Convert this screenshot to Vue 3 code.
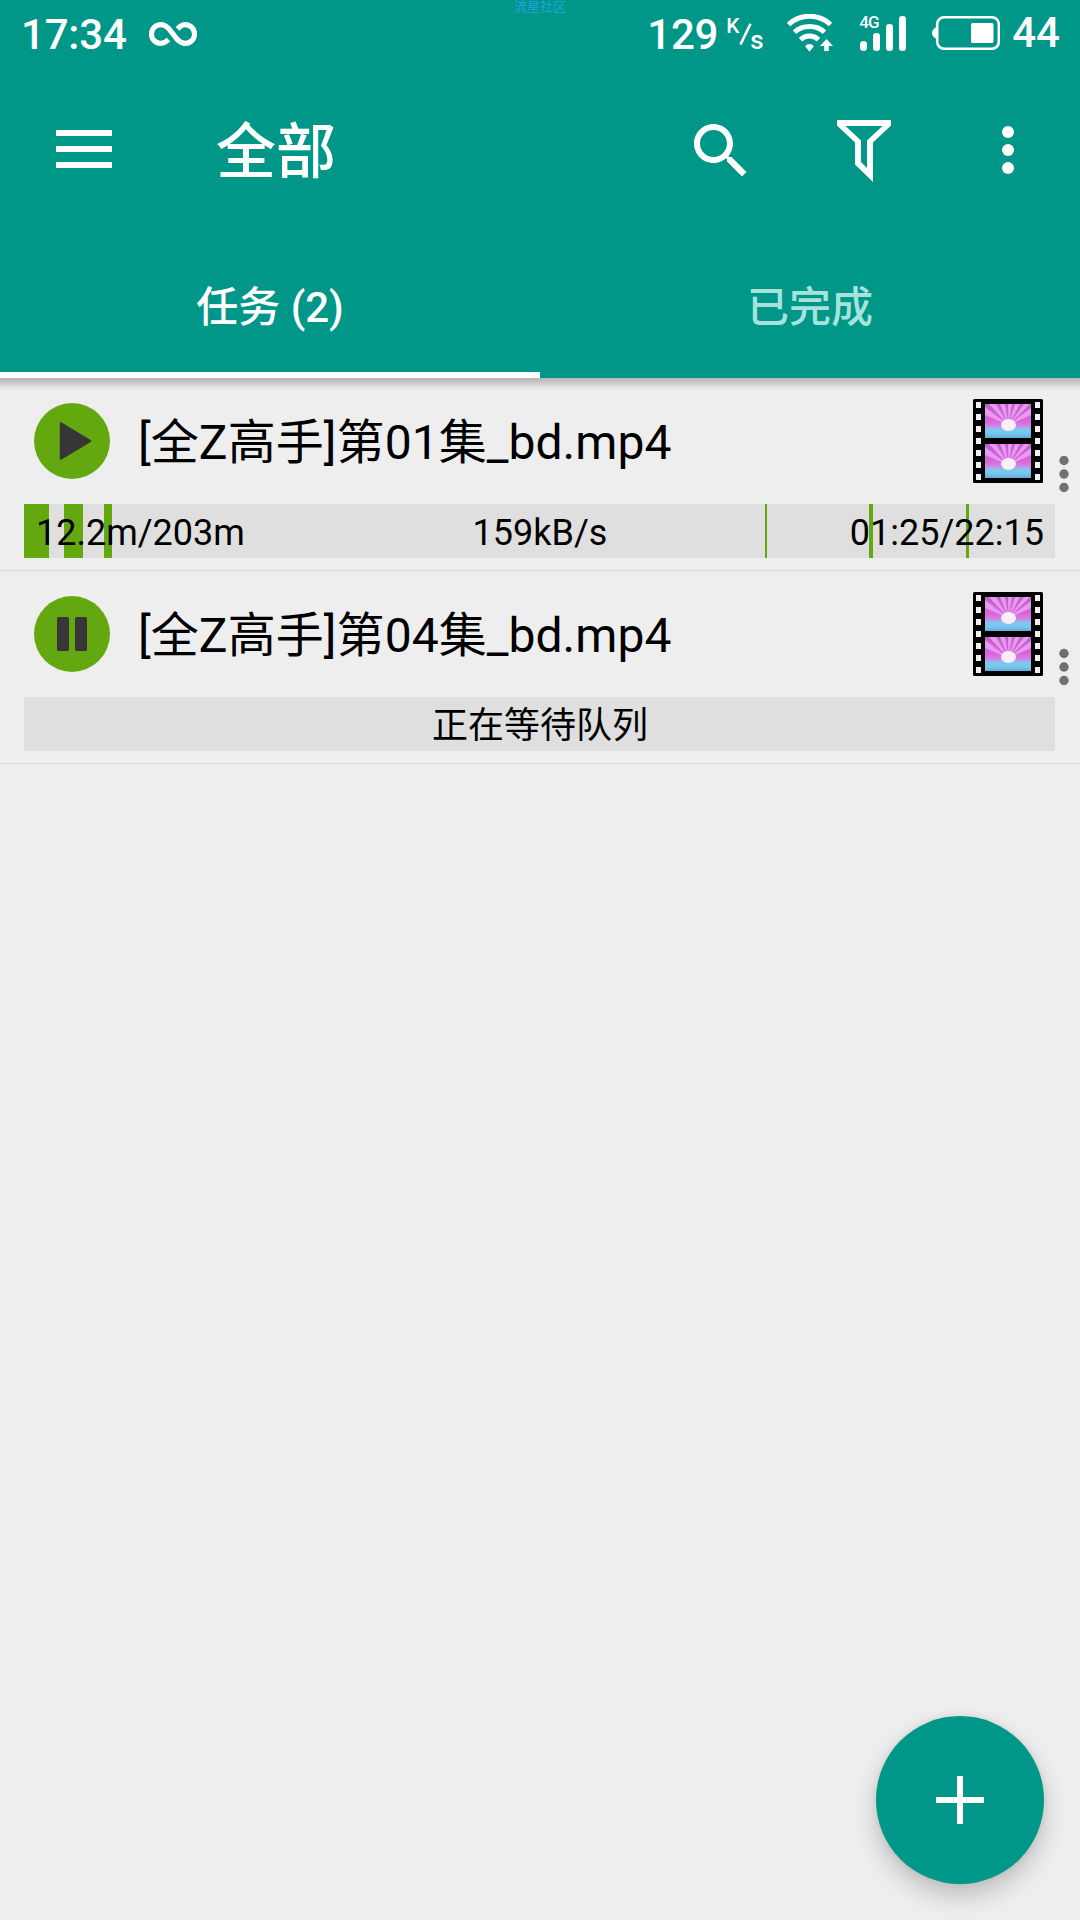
<script setup>
const tasks = [
  {
    name: '[全Z高手]第01集_bd.mp4',
    running: true,
    size: '12.2m/203m',
    speed: '159kB/s',
    time: '01:25/22:15',
    chunks: [
      { at: 0, size: 25 },
      { at: 40, size: 19 },
      { at: 80, size: 8 },
      { at: 741, size: 2 },
      { at: 845, size: 4 },
      { at: 942, size: 3 }
    ]
  },
  { name: '[全Z高手]第04集_bd.mp4', running: false, status: '正在等待队列', chunks: [] }
]
const holes = [3, 15, 27, 39, 51, 63, 75]
const frames = [5, 45]
</script>

<template>
  <div class="screen">
    <header class="header">
      <div class="watermark">流星社区</div>
      <div class="status">
        <span class="clock">17:34</span>
        <svg class="infinity" width="48" height="24" viewBox="0 0 48 24" fill="none" stroke="#fff" stroke-width="5.200">
          <path d="M19.500 17.500C17 20 15 21.400 11.800 21.400a9.400 9.400 0 0 1 0-18.800c3.400 0 5.600 1.500 8 4L28.200 17.400c2.400 2.500 4.600 4 8 4a9.400 9.400 0 0 0 0-18.800c-3.200 0-5.200 1.700-7.700 4.200" />
        </svg>
        <span class="spacer"></span>
        <span class="rate">129</span>
        <span class="unit"><span class="k">K</span><svg width="13" height="22" viewBox="0 0 13 22"><path d="M1.500 21.500L11.500.8" stroke="#fff" stroke-width="2.600" /></svg><span class="s">s</span></span>
        <svg class="wifi" width="46" height="38" viewBox="0 0 46 38" fill="none" stroke="#fff" stroke-width="5">
          <path d="M1.500 10.500C13-.5 32-.5 43.500 10.500" />
          <path d="M7.500 18.200C15.500 10.500 29.500 10.500 37.500 18.200" />
          <path d="M13.500 25.700c5-4.800 13-4.800 18 0" />
          <path d="M18.200 32.200c2-2.800 6.600-2.800 8.600 0l-4.300 5.500z" fill="#fff" stroke="none" />
          <path d="M39.500 25l6.500 7h-4.200v5h-4.600v-5H33z" fill="#fff" stroke="none" />
        </svg>
        <span class="signal">
          <span class="net">4G</span>
          <svg width="46" height="36" viewBox="0 0 46 36" fill="#fff">
            <rect x="0" y="25" width="7" height="10" rx="3.500" />
            <rect x="13" y="17" width="7" height="18" rx="3.200" />
            <rect x="26" y="8" width="7" height="27" rx="3.200" />
            <rect x="39" y="0" width="7" height="35" rx="3.200" />
          </svg>
        </span>
        <svg class="battery" width="68" height="34" viewBox="0 0 68 34">
          <rect x="5.200" y="1.200" width="61.600" height="31.600" rx="7" fill="none" stroke="#fff" stroke-width="2.600" />
          <path d="M5 11C2 12 0 14 0 17s2 5 5 6z" fill="#fff" />
          <rect x="39" y="7" width="22.500" height="20" rx="1.500" fill="#fff" />
        </svg>
        <span class="level">44</span>
      </div>

      <div class="toolbar">
        <svg class="menu" width="56" height="38" viewBox="0 0 56 38" fill="#fff">
          <path d="M0 0h56v6H0zM0 16h56v6H0zM0 32h56v6H0z" />
        </svg>
        <h1>全部</h1>
        <svg class="action search" width="72" height="72" viewBox="0 0 24 24" fill="#fff">
          <path d="M15.500 14h-.790l-.280-.270C15.410 12.590 16 11.110 16 9.500 16 5.910 13.090 3 9.500 3S3 5.910 3 9.500 5.910 16 9.500 16c1.610 0 3.090-.590 4.230-1.570l.270.280v.790l5 4.990L20.490 19l-4.990-5zm-6 0C7.010 14 5 11.990 5 9.500S7.010 5 9.500 5 14 7.010 14 9.500 11.990 14 9.500 14z" />
        </svg>
        <svg class="action" width="72" height="72" viewBox="0 0 72 72" fill="#fff" fill-rule="evenodd">
          <path d="M9 6h54v5.500L45 28.500V68L27 50.500v-22L9 11.500zM17.500 12L33 26.500v21.500l6 6V26.500L54.500 12z" />
        </svg>
        <svg class="action" width="72" height="72" viewBox="0 0 72 72" fill="#fff">
          <circle cx="36" cy="18" r="6" /><circle cx="36" cy="36" r="6" /><circle cx="36" cy="54" r="6" />
        </svg>
      </div>

      <nav class="tabs">
        <div class="tab active">任务 (2)</div>
        <div class="tab">已完成</div>
      </nav>
    </header>

    <main>
      <section v-for="task in tasks" :key="task.name" class="task">
        <div class="top">
          <svg class="state" width="76" height="76" viewBox="0 0 76 76">
            <circle cx="38" cy="38" r="38" fill="#64a810" />
            <path v-if="task.running" d="M27 20.500L56 38 27 55.500z" fill="#363636" stroke="#363636" stroke-width="2.500" stroke-linejoin="round" />
            <g v-else fill="#363636">
              <rect x="23" y="21" width="12" height="34" rx="1.500" />
              <rect x="41" y="21" width="12" height="34" rx="1.500" />
            </g>
          </svg>
          <span class="name">{{ task.name }}</span>
          <svg class="film" width="70" height="84" viewBox="0 0 70 84">
            <defs>
              <linearGradient id="sky" x1="0" y1="0" x2="0" y2="1">
                <stop offset="0" stop-color="#c45fcd" />
                <stop offset=".5" stop-color="#d766dc" />
                <stop offset=".63" stop-color="#dc7de4" />
                <stop offset=".74" stop-color="#83c5eb" />
                <stop offset=".87" stop-color="#76c9ec" />
                <stop offset="1" stop-color="#62ace0" />
              </linearGradient>
            </defs>
            <rect width="70" height="84" rx="1.500" />
            <g fill="#f0f0f0">
              <template v-for="y in holes" :key="y">
                <rect x="3" :y="y" width="5" height="6" />
                <rect x="62" :y="y" width="5" height="6" />
              </template>
            </g>
            <svg v-for="y in frames" :key="y" x="12" :y="y" width="46" height="34" viewBox="0 0 46 34">
              <rect width="46" height="34" fill="url(#sky)" />
              <path fill="#e79af0" d="M23.500 21L0 3v8zM23.500 21L4 0h7zM23.500 21L15 0h5zM23.500 21L23 0h4zM23.500 21L30 0h5zM23.500 21L39 0h6zM23.500 21L46 4v7z" />
              <ellipse cx="23.500" :cy="y === 5 ? 21 : 20" rx="7.500" ry="6" fill="#f9effb" />
            </svg>
          </svg>
          <svg class="more" width="10" height="38" viewBox="0 0 10 38" fill="#707070">
            <circle cx="5" cy="5.500" r="4.700" /><circle cx="5" cy="19" r="4.700" /><circle cx="5" cy="32.500" r="4.700" />
          </svg>
        </div>
        <div class="bar">
          <i v-for="c in task.chunks" :key="c.at" class="chunk" :style="{ left: c.at + 'px', width: c.size + 'px' }"></i>
          <template v-if="task.running">
            <span class="left">{{ task.size }}</span>
            <span class="mid">{{ task.speed }}</span>
            <span class="right">{{ task.time }}</span>
          </template>
          <span v-else class="mid">{{ task.status }}</span>
        </div>
      </section>
    </main>

    <button class="fab">
      <svg width="48" height="48" viewBox="0 0 48 48"><path d="M21 0h6v21h21v6H27v21h-6V27H0v-6h21z" fill="#fff" /></svg>
    </button>
  </div>
</template>

<style>
body {
  margin: 0;
  background: #eee;
}
</style>

<style scoped>
.screen {
  position: relative;
  width: 1080px;
  height: 1920px;
  overflow: hidden;
  background: #eee;
  color: #000;
  font-family: Roboto, "Noto Sans CJK SC", sans-serif;
}
.header {
  position: relative;
  height: 378px;
  background: #009688;
  color: #fff;
}
.header::after {
  content: "";
  position: absolute;
  left: 0;
  right: 0;
  top: 378px;
  height: 12px;
  background: linear-gradient(#b5b5b5, #cbcbcb 40%, #e5e5e5 80%, #eee);
}
.watermark {
  position: absolute;
  left: 514px;
  top: -3px;
  font-size: 13px;
  line-height: 19px;
  color: #22a2e4;
}
.status {
  display: flex;
  align-items: flex-start;
  height: 72px;
  padding: 0 20px 0 21px;
  font-size: 42px;
  font-weight: 500;
  line-height: 69px;
}
.infinity {
  margin: 22px 0 0 22px;
}
.spacer {
  flex: 1;
}
.clock {
  width: 106px;
  letter-spacing: -.2px;
}
.rate {
  width: 73px;
  letter-spacing: -.2px;
}
.unit {
  display: flex;
  width: 38px;
  margin-left: 6px;
  margin-right: 1px;
  font-size: 21px;
  line-height: 22px;
}
.unit .k {
  width: 13px;
  padding-top: 15px;
}
.unit svg {
  flex: none;
  margin-top: 23px;
}
.unit .s {
  margin-top: 29px;
  margin-left: -2px;
  font-size: 26px;
}
.wifi {
  margin: 14px 0 0 22px;
}
.signal {
  position: relative;
  width: 46px;
  margin: 16px 0 0 27px;
  line-height: 0;
}
.net {
  position: absolute;
  left: -1px;
  top: -3px;
  font-size: 17px;
  letter-spacing: -1px;
  line-height: 18px;
}
.battery {
  margin: 16px 0 0 26px;
}
.level {
  margin-left: 12px;
  line-height: 65px;
}
.toolbar {
  display: flex;
  align-items: center;
  height: 156px;
}
.menu {
  margin: -2px 104px 0 56px;
}
h1 {
  flex: 1;
  margin: 5px 0 0;
  font-size: 60px;
  font-weight: 500;
  line-height: 70px;
}
.action {
  margin-right: 72px;
}
.search {
  margin: 1px 71px 0 0;
}
.action:last-child {
  margin-right: 36px;
}
.tabs {
  display: flex;
  height: 150px;
}
.tab {
  box-sizing: border-box;
  flex: 1;
  height: 150px;
  padding-top: 5px;
  border-bottom: 6px solid transparent;
  font-size: 42px;
  font-weight: 500;
  line-height: 149px;
  text-align: center;
  color: #a5e3dc;
}
.tab.active {
  color: #fff;
  border-color: #fff;
}
.task {
  box-sizing: border-box;
  height: 193px;
  border-bottom: 1px solid #d8d8d8;
}
.top {
  display: flex;
  height: 126px;
}
.state {
  margin: 25px 0 0 34px;
}
.name {
  flex: 1;
  margin: 35px 0 0 28px;
  font-size: 48px;
  letter-spacing: .06px;
  line-height: 60px;
  white-space: nowrap;
}
.film {
  margin: 21px 0 0;
}
.more {
  margin: 77px 11px 0 16px;
}
.bar {
  position: relative;
  display: grid;
  grid-template-columns: 1fr auto 1fr;
  width: 1008px;
  height: 54px;
  margin-left: 24px;
  padding: 0 11px 0 12px;
  background: #dfdfdf;
  font-size: 36px;
  line-height: 58px;
}
.bar span {
  position: relative;
}
.mid {
  grid-column: 2;
}
.right {
  text-align: right;
}
.chunk {
  position: absolute;
  top: 0;
  height: 54px;
  background: #64a810;
}
.fab {
  position: absolute;
  right: 36px;
  bottom: 36px;
  display: flex;
  align-items: center;
  justify-content: center;
  width: 168px;
  height: 168px;
  padding: 0;
  border: 0;
  border-radius: 50%;
  background: #009688;
  box-shadow: 0 12px 24px rgba(0, 0, 0, .2), 0 0 6px rgba(0, 0, 0, .08);
}
</style>
